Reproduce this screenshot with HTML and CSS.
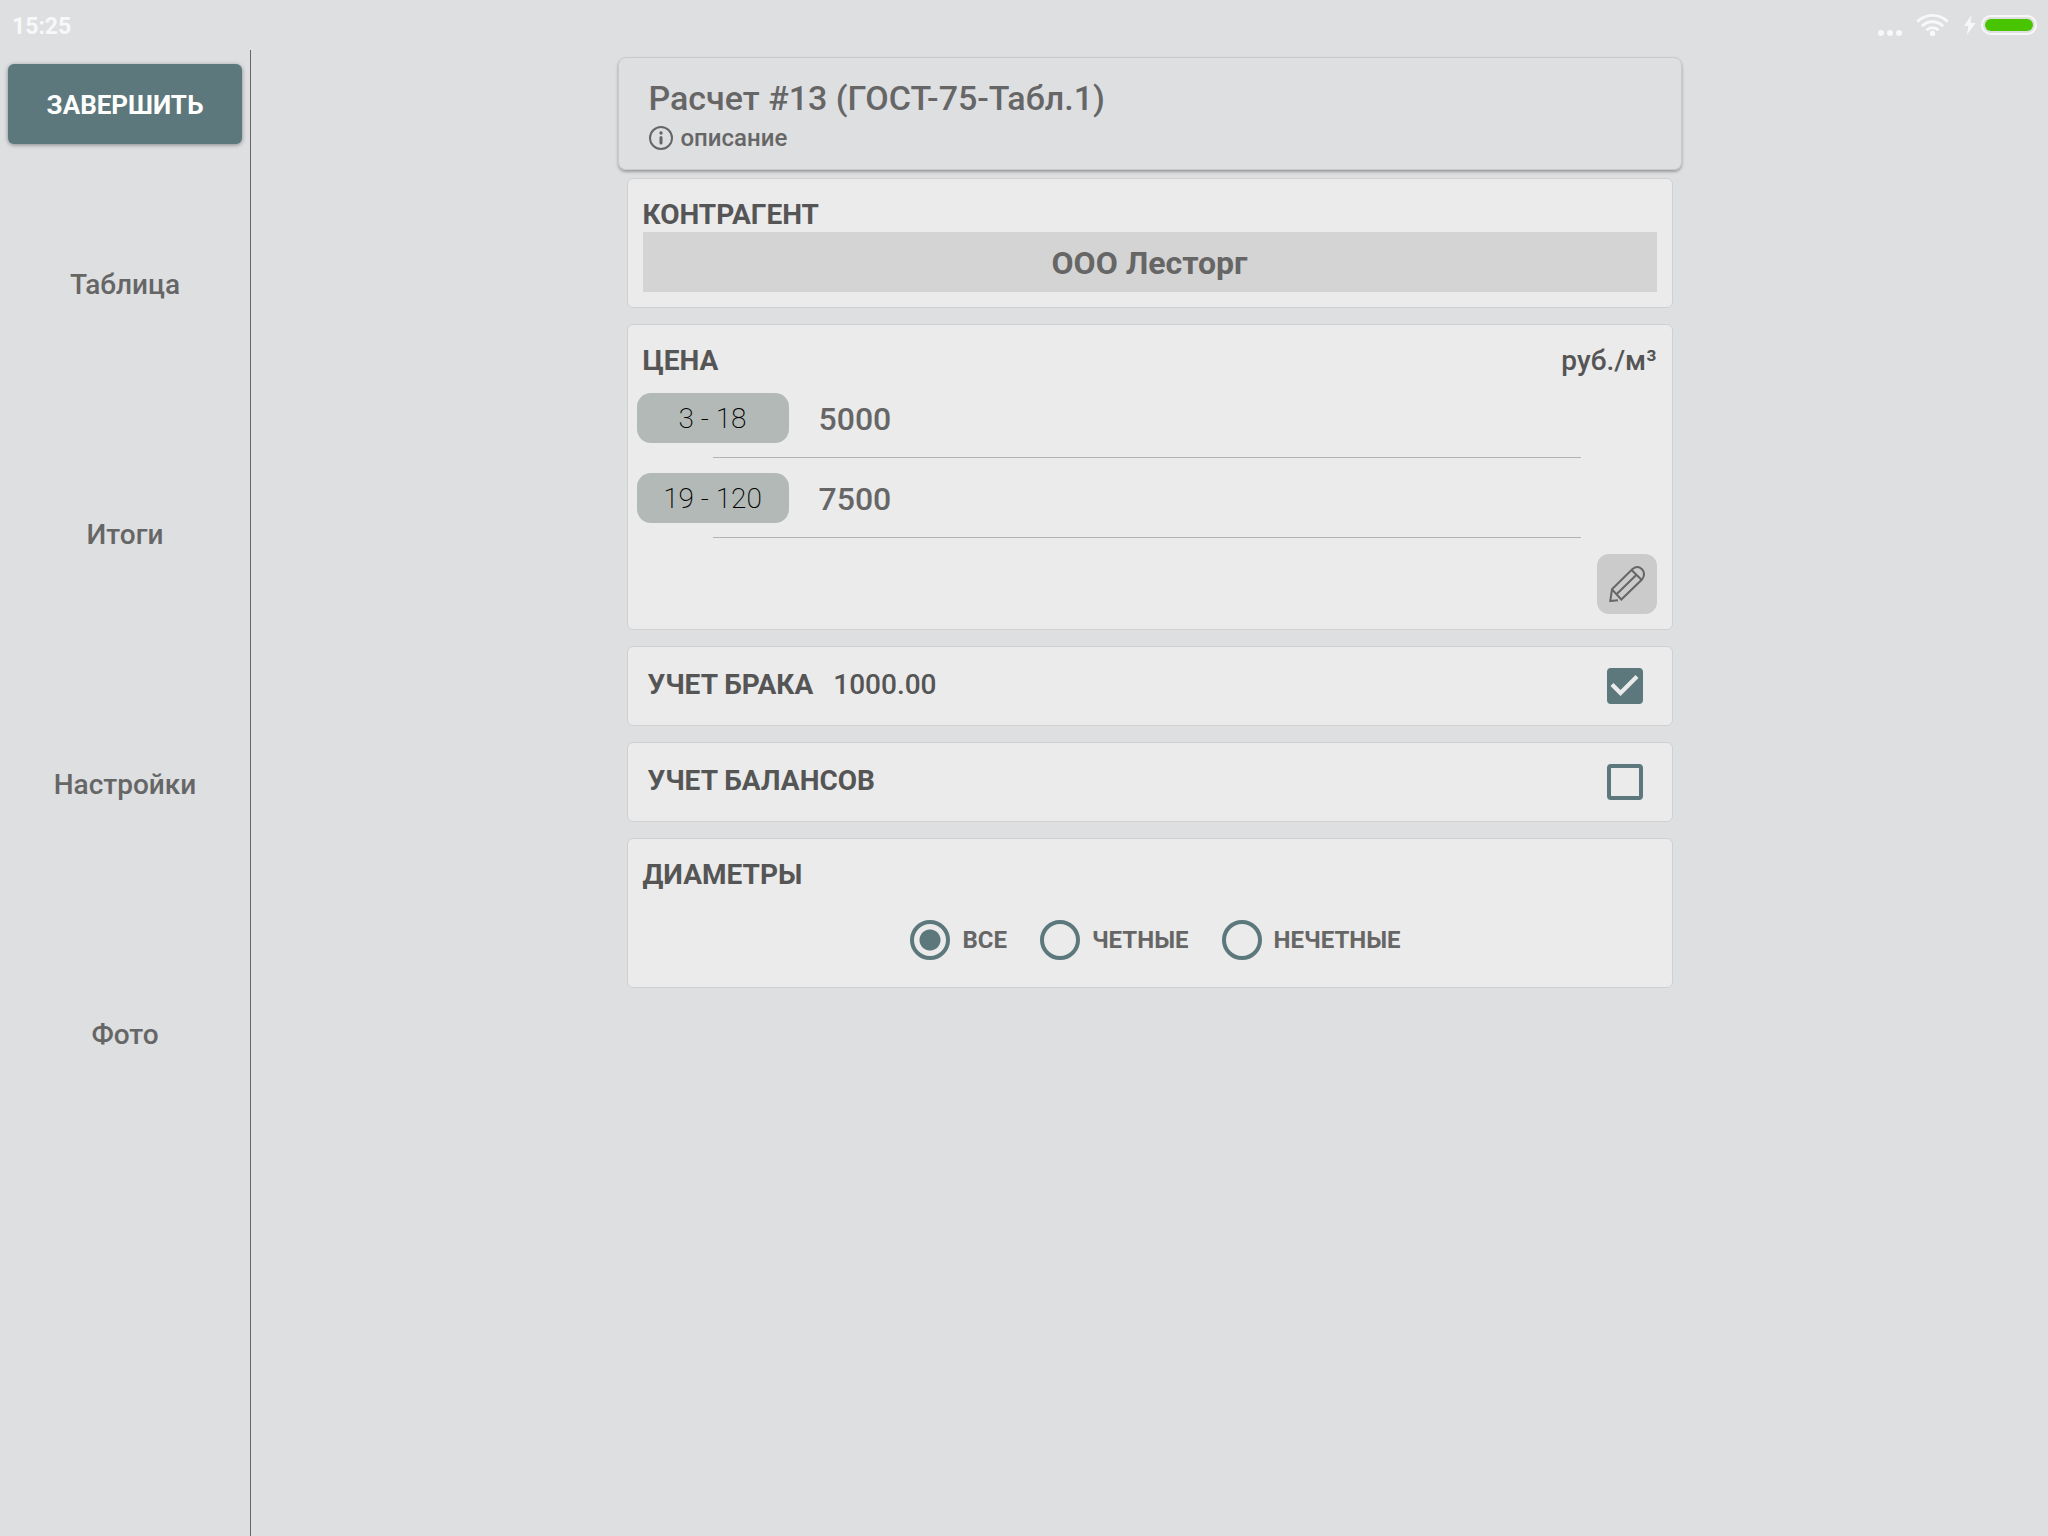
FILE: index.html
```html
<!DOCTYPE html>
<html lang="ru">
<head>
  <meta charset="UTF-8">
  <meta name="viewport" content="width=device-width, initial-scale=1.0">
  <title>Расчет #13</title>
  <link rel="stylesheet" href="styles.css">
</head>
<body>
  <header class="status-bar">
    <span class="clock">15:25</span>
    <svg class="status-icons" width="160" height="26" viewBox="0 0 160 26" aria-hidden="true">
      <!-- signal -->
      <g fill="#f8f8f8">
        <circle cx="3" cy="21" r="3"/>
        <circle cx="12" cy="21" r="3"/>
        <circle cx="21" cy="21" r="3"/>
        <circle cx="54.500" cy="21.500" r="2.700"/>
      </g>
      <!-- wifi -->
      <g fill="none" stroke="#f8f8f8" stroke-width="2.900">
        <path d="M39.300 9.700a21.500 21.500 0 0 1 30.400 0"/>
        <path d="M43.900 14.200a15 15 0 0 1 21.200 0"/>
        <path d="M48.500 18.300a8.500 8.500 0 0 1 12 0"/>
      </g>
      <!-- battery -->
      <path d="M93.500 3L86 14h4.500L88.800 23L97.500 11h-5z" fill="#f8f8f8"/>
      <rect x="104" y="4" width="54" height="18" rx="9" fill="none" stroke="#f8f8f8" stroke-width="2"/>
      <rect x="107" y="7" width="48" height="12" rx="6" fill="#48c400"/>
    </svg>
  </header>

  <div class="layout">
    <aside class="sidebar">
      <button class="finish-btn" type="button">ЗАВЕРШИТЬ</button>
      <nav class="menu">
        <a href="#table">Таблица</a>
        <a href="#totals">Итоги</a>
        <a href="#settings">Настройки</a>
        <a href="#photo">Фото</a>
      </nav>
    </aside>

    <main class="content">
      <section class="calc-header">
        <h1>Расчет #13 (ГОСТ-75-Табл.1)</h1>
        <p class="description">
          <svg width="24" height="24" viewBox="1 1 24 24" aria-hidden="true">
            <circle cx="13" cy="13" r="11" fill="none" stroke="#666" stroke-width="2"/>
            <circle cx="13" cy="8" r="1.700" fill="#666"/>
            <path d="M13 12.500v5.500" stroke="#666" stroke-width="3" stroke-linecap="round"/>
          </svg>
          описание
        </p>
      </section>

      <div class="panels">
        <section class="panel">
          <h2 class="panel-title">КОНТРАГЕНТ</h2>
          <button class="partner" type="button">ООО Лесторг</button>
        </section>

        <section class="panel">
          <div class="panel-head">
            <h2 class="panel-title">ЦЕНА</h2>
            <span class="unit">руб./м³</span>
          </div>
          <div class="price-row">
            <label class="range" for="price-1">3 - 18</label>
            <input class="price" id="price-1" type="text" value="5000">
          </div>
          <div class="price-row">
            <label class="range" for="price-2">19 - 120</label>
            <input class="price" id="price-2" type="text" value="7500">
          </div>
          <button class="edit-btn" type="button" aria-label="Изменить">
            <svg width="36" height="36" viewBox="0 0 36 36" fill="none" stroke="#666" stroke-width="2">
              <path d="M9 34.300L1.300 35L3 23.300L23.500 3Q28.500 -1 33 3.200Q37 8 33 13.500L12.300 33.500L3 23.300"/>
              <path d="M22.500 4L32.500 13.800M7.500 28.300L27.500 8.700"/>
            </svg>
          </button>
        </section>

        <section class="panel check-row">
          <label for="defects">УЧЕТ БРАКА</label>
          <span class="amount">1000.00</span>
          <input class="checkbox" id="defects" type="checkbox" checked>
        </section>

        <section class="panel check-row">
          <label for="balances">УЧЕТ БАЛАНСОВ</label>
          <input class="checkbox" id="balances" type="checkbox">
        </section>

        <section class="panel">
          <h2 class="panel-title">ДИАМЕТРЫ</h2>
          <div class="radio-group">
            <label><input type="radio" name="diameter" checked>ВСЕ</label>
            <label><input type="radio" name="diameter">ЧЕТНЫЕ</label>
            <label><input type="radio" name="diameter">НЕЧЕТНЫЕ</label>
          </div>
        </section>
      </div>
    </main>
  </div>
</body>
</html>
```

FILE: styles.css
```css
* {
  box-sizing: border-box;
}

body {
  margin: 0;
  min-height: 100vh;
  display: flex;
  flex-direction: column;
  font-family: Roboto, "Liberation Sans", sans-serif;
  font-size: 28px;
  font-weight: 500;
  color: #666;
  background-color: #dedfe1;
}

h1, h2, p {
  margin: 0;
}

button, input {
  font-family: inherit;
  color: inherit;
}

button {
  border: none;
  padding: 0;
  cursor: pointer;
}

.status-bar {
  display: flex;
  justify-content: space-between;
  align-items: center;
  height: 50px;
  padding: 0 10px 0 12px;
}

.clock {
  padding-top: 2px;
  font-size: 23px;
  font-weight: 700;
  color: #f8f8f8;
}

.layout {
  flex: 1;
  display: flex;
}

/* Боковое меню */
.sidebar {
  flex: none;
  width: 251px;
  padding: 14px 8px 0;
  border-right: 1px solid #666;
}

.finish-btn {
  width: 100%;
  height: 80px;
  padding-top: 2px;
  font-size: 26px;
  font-weight: 700;
  color: #fff;
  background-color: #5c787d;
  border-radius: 6px;
  box-shadow: 0 1px 4px rgba(0, 0, 0, 0.4);
}

.menu {
  display: flex;
  flex-direction: column;
  margin-top: 15px;
}

.menu a {
  display: flex;
  align-items: center;
  justify-content: center;
  height: 250px;
  color: inherit;
  text-decoration: none;
}

/* Основная часть */
.content {
  flex: 1;
  display: flex;
  flex-direction: column;
  align-items: center;
  padding: 7px 16px 16px;
}

.calc-header {
  width: 100%;
  max-width: 1064px;
  padding: 20px 30px 11px;
  border: 1px solid #c8c9cb;
  border-radius: 8px;
  box-shadow: 0 2px 3px rgba(0, 0, 0, 0.3);
}

h1 {
  font-size: 34px;
  font-weight: 500;
  line-height: 40px;
}

.description {
  display: flex;
  align-items: center;
  gap: 8px;
  font-size: 24px;
  line-height: 40px;
}

.panels {
  display: flex;
  flex-direction: column;
  gap: 16px;
  width: 100%;
  max-width: 1046px;
  margin-top: 8px;
}

.panel {
  padding: 19px 15px 15px;
  background-color: #ebebeb;
  border: 1px solid #cfd0d1;
  border-radius: 6px;
}

.panel-head {
  display: flex;
  justify-content: space-between;
}

.panel-title {
  font-size: 28px;
  font-weight: 700;
  line-height: 34px;
  color: #555;
}

.unit {
  line-height: 34px;
  color: #555;
}

.partner {
  display: block;
  width: 100%;
  height: 60px;
  padding-top: 2px;
  font-size: 32px;
  font-weight: 700;
  background-color: #d4d4d4;
}

/* Цены по диапазонам диаметров */
.price-row {
  display: flex;
  flex-wrap: wrap;
  align-items: center;
  gap: 0 30px;
  margin-left: -6px;
  padding-top: 15px;
}

.price-row::after {
  content: "";
  flex: 0 0 calc(100% - 152px);
  height: 14px;
  margin: 0 76px;
  border-bottom: 1px solid #b3b3b3;
}

.range {
  width: 152px;
  padding-top: 2px;
  line-height: 48px;
  text-align: center;
  font-weight: 200;
  color: #000;
  background-color: #b3b9b6;
  border-radius: 14px;
}

.price {
  flex: 1;
  min-width: 0;
  padding: 2px 0 0;
  font-size: 32px;
  font-weight: 500;
  background: none;
  border: none;
}

.edit-btn {
  display: flex;
  align-items: center;
  justify-content: center;
  width: 60px;
  height: 60px;
  margin: 16px 0 0 auto;
  background-color: #cbcbcb;
  border-radius: 12px;
}

.check-row {
  display: flex;
  align-items: center;
  gap: 20px;
  padding: 21px 29px 21px 20px;
  line-height: 32px;
  color: #555;
}

.check-row label {
  font-weight: 700;
}

.check-row label,
.amount {
  padding-bottom: 2px;
}

.checkbox {
  appearance: none;
  position: relative;
  width: 36px;
  height: 36px;
  margin: 0 0 0 auto;
  border: 4px solid #5c787d;
  border-radius: 4px;
}

.checkbox:checked {
  background-color: #5c787d;
}

.checkbox:checked::after {
  content: "";
  position: absolute;
  inset: -4px;
  background-color: #ebebeb;
  clip-path: polygon(4px 18px, 7px 15px, 14px 22px, 29px 7px, 32px 10px, 14px 28px);
}

.radio-group {
  display: flex;
  justify-content: center;
  gap: 33px;
  padding: 28px 0 12px 12px;
}

.radio-group label {
  display: flex;
  align-items: center;
  gap: 12px;
  font-size: 24px;
  font-weight: 700;
}

.radio-group input {
  appearance: none;
  width: 40px;
  height: 40px;
  margin: 0;
  border: 4px solid #5c787d;
  border-radius: 50%;
}

.radio-group input:checked {
  background: radial-gradient(circle, #5c787d 10px, transparent 11px);
}
```
